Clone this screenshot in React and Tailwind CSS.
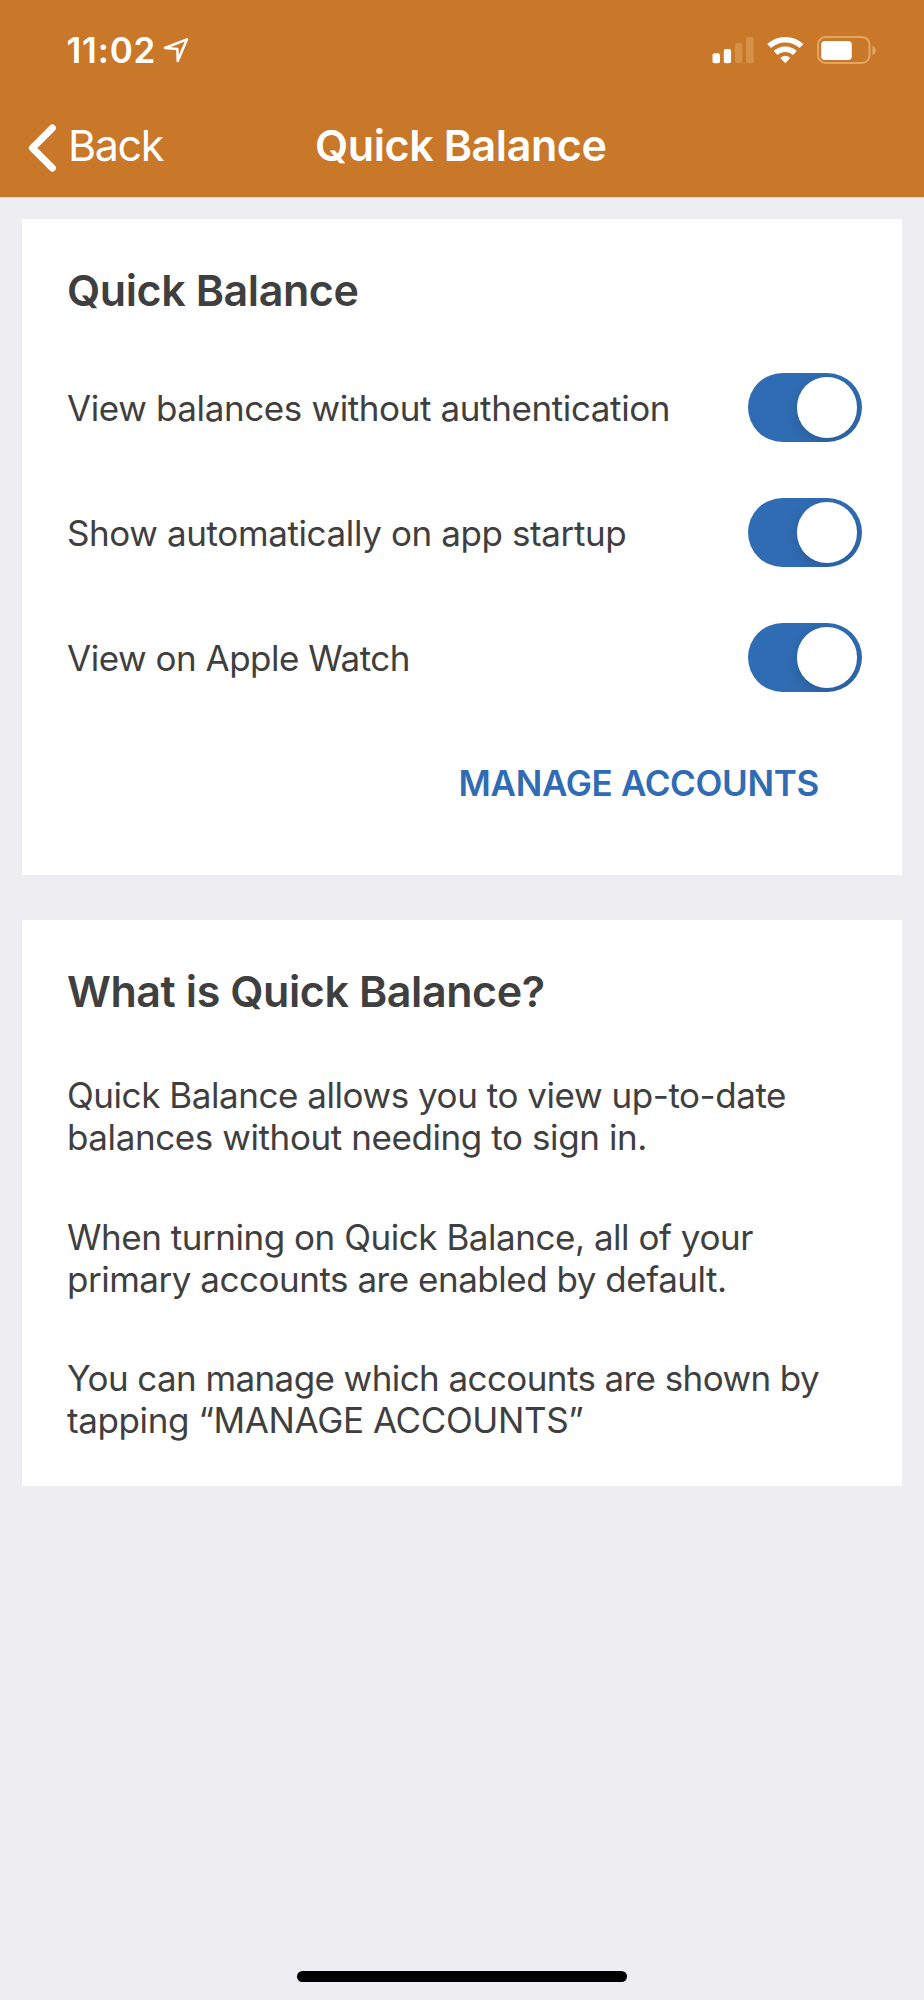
function LocationArrow() {
  return (
    <svg className="ml-[7px] h-[26px] w-[26px]" viewBox="0 0 26 26" fill="none">
      <path d="M24 2.3 L1.9 11 L14.4 11.9 L14.7 23.9 Z" stroke="#fff" strokeWidth="2.5" strokeLinejoin="round" />
    </svg>
  );
}

function Signal() {
  return (
    <svg className="h-[28px] w-[42px]" viewBox="712 36 42 28">
      <rect x="712.5" y="53.3" width="7.5" height="10" rx="2" fill="#fff" />
      <rect x="723.8" y="49" width="7.3" height="14.3" rx="2" fill="#fff" />
      <rect x="735" y="43" width="7.4" height="20.3" rx="2" fill="#d69148" />
      <rect x="746.1" y="37" width="7.5" height="26.3" rx="2" fill="#d69148" />
    </svg>
  );
}

function Wifi() {
  return (
    <svg className="ml-[13px] h-[28px] w-[37px]" viewBox="767 36 37 28" fill="none">
      <path d="M769.1 46.1 A23.6 23.6 0 0 1 801.5 46.1" stroke="#fff" strokeWidth="5.5" />
      <path d="M775.6 53.1 A14.1 14.1 0 0 1 795 53.1" stroke="#fff" strokeWidth="5.5" />
      <path d="M785.3 63.2 L780.3 58 Q785.3 53.4 790.3 58 Z" fill="#fff" />
    </svg>
  );
}

function Battery() {
  return (
    <svg className="ml-[13px] h-[28px] w-[59px]" viewBox="817 36 59 28" fill="none">
      <rect x="818" y="37" width="51.5" height="26" rx="7.5" stroke="#e2a562" strokeWidth="2" />
      <rect x="821.2" y="41" width="30.6" height="19" rx="3.8" fill="#fff" />
      <path d="M872.4 45.8 Q875.8 47.2 875.8 50.4 Q875.8 53.6 872.4 55 Z" fill="#e2a562" />
    </svg>
  );
}

function Toggle() {
  return (
    <button
      type="button"
      role="switch"
      aria-checked="true"
      className="flex h-[69px] w-[114px] shrink-0 items-center justify-end overflow-hidden rounded-full bg-[#306cb3] pr-[4.5px]"
    >
      <span className="h-[60.5px] w-[60.5px] rounded-full bg-white shadow-[0_5px_14px_rgba(0,0,0,0.15)]" />
    </button>
  );
}

function SettingRow({ children }) {
  return (
    <div className="flex h-[125px] items-center justify-between pr-[40.3px] leading-[42px] whitespace-nowrap">
      {children}
      <Toggle />
    </div>
  );
}

export default function App() {
  return (
    <div className="flex h-[2000px] w-[924px] flex-col bg-[#eeedf2] font-['Inter','Liberation_Sans',sans-serif] text-[35px] text-[#3f3f3f]">
      <header className="h-[198px] shrink-0 border-b border-[#dedae0] bg-[#c97729] text-white">
        <div className="flex h-[100px] items-center pr-[48px] pl-[66.5px]">
          <span className="text-[35px] leading-[42px] font-semibold tracking-[0.8px]">11:02</span>
          <LocationArrow />
          <div className="ml-auto flex items-center">
            <Signal />
            <Wifi />
            <Battery />
          </div>
        </div>
        <nav className="flex h-[90px] items-center text-[43px] leading-[52px]">
          <div className="flex w-[315px] items-center pl-[28px]">
            <svg className="mt-[6px] h-[48px] w-[29px]" viewBox="0 0 29 48" fill="none">
              <path d="M24.4 4 L4.4 24 L24.4 44" stroke="#fff" strokeWidth="7" strokeLinecap="round" strokeLinejoin="round" />
            </svg>
            <span className="ml-[11px] tracking-[-1.4px]">Back</span>
          </div>
          <h1 className="font-semibold tracking-[-0.42px]">Quick Balance</h1>
        </nav>
      </header>

      <main className="flex flex-col gap-[45px] px-[22px] pt-[21px]">
        <section className="h-[656px] bg-white pt-[45px] pl-[45px]">
          <h2 className="text-[43px] leading-[52px] font-semibold tracking-[-0.42px]">Quick Balance</h2>
          <div className="mt-[29px]">
            <SettingRow>
              <span className="tracking-[-0.39px]">View balances without authentication</span>
            </SettingRow>
            <SettingRow>
              <span className="tracking-[-0.39px]">Show automatically on app startup</span>
            </SettingRow>
            <SettingRow>
              <span className="tracking-[-0.49px]">View on Apple Watch</span>
            </SettingRow>
          </div>
          <div className="flex justify-end pt-[42px] pr-[83px]">
            <button type="button" className="leading-[42px] font-semibold tracking-[-0.33px] text-[#306cb3]">
              MANAGE ACCOUNTS
            </button>
          </div>
        </section>

        <section className="h-[566px] bg-white pt-[45px] pl-[45px] whitespace-nowrap">
          <h2 className="text-[43px] leading-[52px] font-semibold tracking-[-0.42px]">What is Quick Balance?</h2>
          <div className="mt-[57px] flex flex-col gap-[57px] leading-[42.3px]">
            <p>
              <span className="block tracking-[-0.45px]">Quick Balance allows you to view up-to-date</span>
              <span className="block tracking-[-0.41px]">balances without needing to sign in.</span>
            </p>
            <p>
              <span className="block tracking-[-0.465px]">When turning on Quick Balance, all of your</span>
              <span className="block tracking-[-0.48px]">primary accounts are enabled by default.</span>
            </p>
            <p>
              <span className="block tracking-[-0.59px]">You can manage which accounts are shown by</span>
              <span className="block tracking-[-0.38px]">tapping “MANAGE ACCOUNTS”</span>
            </p>
          </div>
        </section>
      </main>

      <div className="mx-auto mt-auto mb-[18px] h-[11px] w-[330px] rounded-full bg-black" />
    </div>
  );
}
